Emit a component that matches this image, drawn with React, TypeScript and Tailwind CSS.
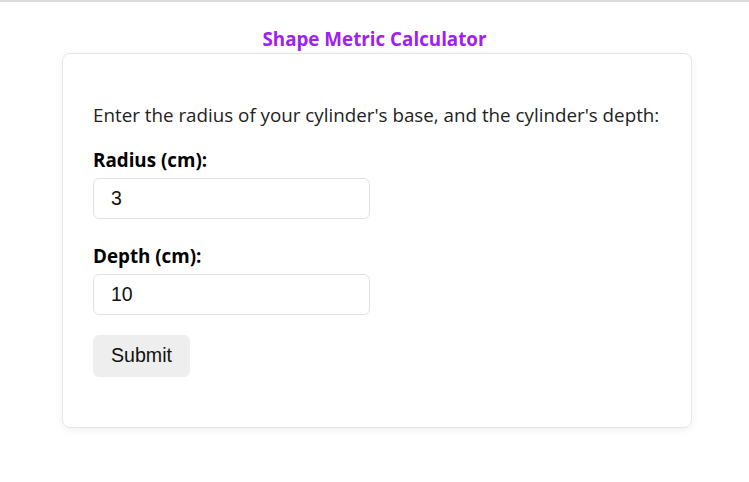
import React, { useState } from "react";

export default function App() {
  const [radius, setRadius] = useState("3");
  const [depth, setDepth] = useState("10");

  return (
    <div className="min-h-[482px] bg-white border-t-2 border-[#dcdcdc] font-['Open_Sans',sans-serif] text-black">
      <h1 className="mt-[24px] text-center text-[18.8px] leading-[26px] font-bold text-[#a020f0]">
        Shape Metric Calculator
      </h1>
      <div className="ml-[62px] mt-[1px] w-[630px] rounded-lg border border-[#e6e6e6] bg-white px-[30px] pt-[48px] pb-[50px] shadow-[0_2px_10px_rgba(0,0,0,0.06)]">
        <p className="whitespace-nowrap text-[18.8px] leading-[26px] text-[#222]">
          Enter the radius of your cylinder's base, and the cylinder's depth:
        </p>
        <form className="mt-[19px]" onSubmit={(e) => e.preventDefault()}>
          <label className="block text-[18.8px] leading-[26px] font-bold">Radius (cm):</label>
          <input
            value={radius}
            onChange={(e) => setRadius(e.target.value)}
            className="mt-[5px] block h-[41px] w-[277px] rounded-md border border-[#e3e3e3] px-[17px] font-['Liberation_Sans',sans-serif] text-[19.5px] text-[#111] outline-none"
          />
          <label className="mt-[24px] block text-[18.8px] leading-[26px] font-bold">Depth (cm):</label>
          <input
            value={depth}
            onChange={(e) => setDepth(e.target.value)}
            className="mt-[5px] block h-[41px] w-[277px] rounded-md border border-[#e3e3e3] px-[17px] font-['Liberation_Sans',sans-serif] text-[19.5px] text-[#111] outline-none"
          />
          <button
            type="submit"
            className="mt-[20px] block h-[42px] w-[97px] rounded-md bg-[#eeeeee] font-['Liberation_Sans',sans-serif] text-[19.6px] text-[#111]"
          >
            Submit
          </button>
        </form>
      </div>
    </div>
  );
}
